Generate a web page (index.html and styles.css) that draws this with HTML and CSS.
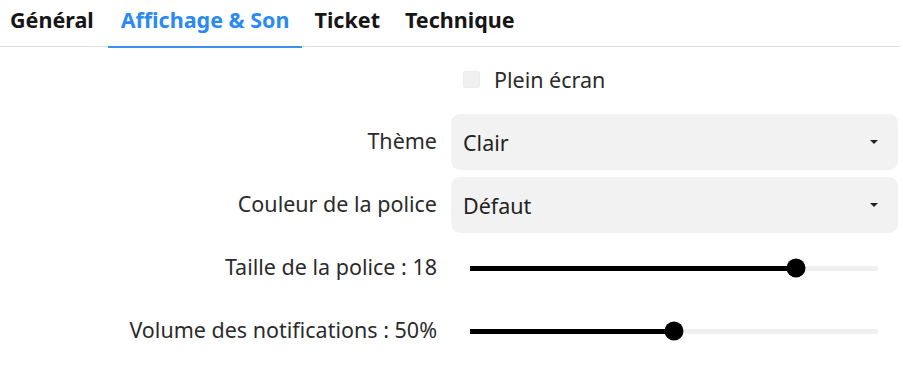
FILE: index.html
```html
<!DOCTYPE html>
<html lang="fr">
<head>
    <meta charset="UTF-8">
    <meta name="viewport" content="width=device-width, initial-scale=1.0">
    <title>Paramètres</title>
    <link rel="stylesheet" href="styles.css">
</head>
<body>
    <div class="tabs">
        <div class="tab">Général</div>
        <div class="tab active">Affichage &amp; Son</div>
        <div class="tab">Ticket</div>
        <div class="tab">Technique</div>
    </div>

    <div class="settings">
        <div class="label"></div>
        <div class="control">
            <label class="checkbox">
                <span class="box"></span>
                Plein écran
            </label>
        </div>

        <div class="label">Thème</div>
        <div class="control">
            <div class="select">
                <span>Clair</span>
                <span class="arrow"></span>
            </div>
        </div>

        <div class="label">Couleur de la police</div>
        <div class="control">
            <div class="select">
                <span>Défaut</span>
                <span class="arrow"></span>
            </div>
        </div>

        <div class="label">Taille de la police : 18</div>
        <div class="control">
            <div class="slider">
                <div class="track">
                    <div class="fill" style="width: 80%"></div>
                    <div class="thumb" style="left: 80%"></div>
                </div>
            </div>
        </div>

        <div class="label">Volume des notifications : 50%</div>
        <div class="control">
            <div class="slider">
                <div class="track">
                    <div class="fill" style="width: 50%"></div>
                    <div class="thumb" style="left: 50%"></div>
                </div>
            </div>
        </div>
    </div>
</body>
</html>
```

FILE: styles.css
```css
body {
    margin: 0;
    padding: 0;
    background: #fff;
    color: #2b2b2b;
    font-family: "Noto Sans", "Open Sans", sans-serif;
    font-size: 21.5px;
}

.tabs {
    display: flex;
    height: 46px;
    border-bottom: 1px solid #dcdcdc;
    margin-right: 3px;
}

.tab {
    display: flex;
    align-items: center;
    padding: 0 12px 8px 13px;
    margin-bottom: -1px;
    font-weight: bold;
    color: #161616;
    border-bottom: 2px solid transparent;
    box-sizing: border-box;
    height: 48px;
}

.tab:first-child {
    padding-left: 10px;
    padding-right: 14px;
}

.tab.active {
    color: #2b8af2;
    border-bottom-color: #3b91f0;
}

.settings {
    display: grid;
    grid-template-columns: 437px 1fr;
    grid-auto-rows: 56px;
    column-gap: 14px;
    row-gap: 7px;
    padding: 4px 5px 0 0;
}

.label {
    display: flex;
    align-items: center;
    justify-content: flex-end;
    padding-bottom: 4px;
    white-space: nowrap;
}

.control {
    display: flex;
    align-items: center;
}

.checkbox {
    display: flex;
    align-items: center;
    gap: 14px;
    padding-left: 12px;
}

.box {
    width: 17px;
    height: 17px;
    background: #f0f0f0;
    border: 1px solid #ececec;
    box-sizing: border-box;
    border-radius: 2px;
}

.select {
    flex: 1;
    height: 56px;
    box-sizing: border-box;
    background: #f2f2f2;
    border-radius: 9px;
    display: flex;
    align-items: center;
    justify-content: space-between;
    padding: 0 20px 0 12px;
    color: #222;
}

.arrow {
    width: 0;
    height: 0;
    border-left: 4px solid transparent;
    border-right: 4px solid transparent;
    border-top: 4px solid #222;
}

.slider {
    flex: 1;
    padding: 0 20px 0 19px;
}

.track {
    position: relative;
    height: 5px;
    background: #f0f0f0;
    border-radius: 2px;
}

.fill {
    height: 100%;
    background: #000;
}

.thumb {
    position: absolute;
    top: 50%;
    width: 19px;
    height: 19px;
    border-radius: 50%;
    background: #000;
    transform: translate(-50%, -50%);
}
```
